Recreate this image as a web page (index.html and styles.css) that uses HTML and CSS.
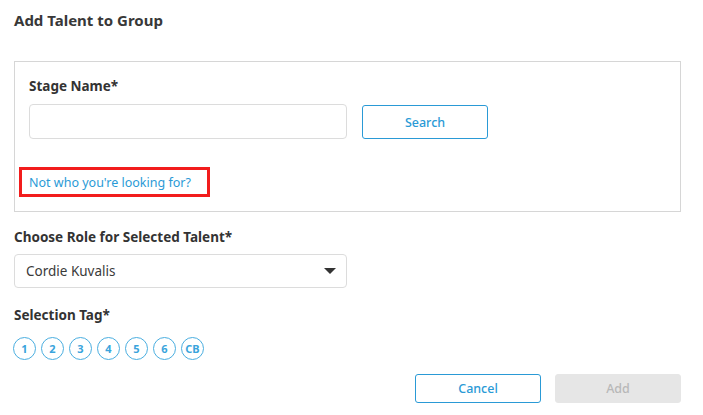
FILE: index.html
```html
<!DOCTYPE html>
<html lang="en">
<head>
    <meta charset="UTF-8">
    <meta name="viewport" content="width=device-width, initial-scale=1.0">
    <title>Add Talent to Group</title>
    <link rel="stylesheet" href="styles.css">
</head>
<body>
    <div class="modal">
        <h1 class="title">Add Talent to Group</h1>

        <div class="search-box">
            <label class="label" for="stage">Stage Name*</label>
            <div class="search-row">
                <input id="stage" class="text-input" type="text">
                <button class="btn btn-outline">Search</button>
            </div>
            <div class="hint">
                <a href="#" class="link">Not who you're looking for?</a>
            </div>
        </div>

        <label class="label role-label">Choose Role for Selected Talent*</label>
        <div class="select">
            <span>Cordie Kuvalis</span>
            <span class="caret"></span>
        </div>

        <label class="label tag-label">Selection Tag*</label>
        <div class="tags">
            <span class="tag">1</span>
            <span class="tag">2</span>
            <span class="tag">3</span>
            <span class="tag">4</span>
            <span class="tag">5</span>
            <span class="tag">6</span>
            <span class="tag">CB</span>
        </div>

        <div class="actions">
            <button class="btn btn-outline">Cancel</button>
            <button class="btn btn-disabled" disabled>Add</button>
        </div>
    </div>
</body>
</html>
```

FILE: styles.css
```css
*{
    margin: 0;
    padding: 0;
    box-sizing: border-box;
}
body{
    background-color: #fff;
    color: #333;
    font-family: "Noto Sans", "Open Sans", sans-serif;
}
.modal{
    padding: 9px 22px 0 14px;
}
.title{
    font-size: 15px;
    font-weight: 700;
    line-height: 22px;
    color: #383838;
}
.search-box{
    margin-top: 30px;
    border: 1px solid #d6d6d6;
    padding: 14px 14px 13px 14px;
    height: 151px;
}
.label{
    display: block;
    font-size: 13.5px;
    font-weight: 700;
    line-height: 20px;
    color: #333;
}
.search-row{
    display: flex;
    margin-top: 8px;
}
.text-input{
    width: 318px;
    height: 35px;
    border: 1px solid #dcdcdc;
    border-radius: 4px;
    outline: none;
}
.btn{
    width: 126px;
    height: 34px;
    border-radius: 3px;
    font-family: inherit;
    font-size: 12.5px;
    font-weight: 500;
    cursor: pointer;
}
.search-row .btn{
    margin-left: 15px;
    margin-top: 1px;
}
.btn-outline{
    background-color: #fff;
    border: 1px solid #2a9ad6;
    color: #2a9ad6;
}
.btn-disabled{
    background-color: #e6e6e6;
    border: 1px solid #e6e6e6;
    color: #b8b8b8;
    cursor: default;
}
.hint{
    margin: 28px 0 0 -10px;
    width: 191px;
    height: 30px;
    border: 3px solid #f21c1c;
    padding-left: 7px;
    display: flex;
    align-items: center;
}
.link{
    font-size: 12.5px;
    color: #2a9ad6;
    text-decoration: none;
}
.role-label{
    margin-top: 15px;
}
.select{
    margin-top: 7px;
    width: 333px;
    height: 34px;
    border: 1px solid #dcdcdc;
    border-radius: 4px;
    display: flex;
    align-items: center;
    justify-content: space-between;
    padding: 0 10px 0 11px;
    font-size: 13.5px;
    color: #3a3a3a;
}
.caret{
    width: 0;
    height: 0;
    border-left: 6px solid transparent;
    border-right: 6px solid transparent;
    border-top: 6px solid #333;
}
.tag-label{
    margin-top: 17px;
}
.tags{
    display: flex;
    gap: 5px;
    margin-top: 12px;
    margin-left: -1px;
}
.tag{
    width: 23px;
    height: 23px;
    border: 1.5px solid #4aaee0;
    border-radius: 50%;
    display: flex;
    align-items: center;
    justify-content: center;
    font-size: 11px;
    font-weight: 700;
    color: #3aa4dc;
}
.actions{
    display: flex;
    justify-content: flex-end;
    gap: 14px;
    margin-top: 14px;
}
.actions .btn{
    height: 29px;
}
```
